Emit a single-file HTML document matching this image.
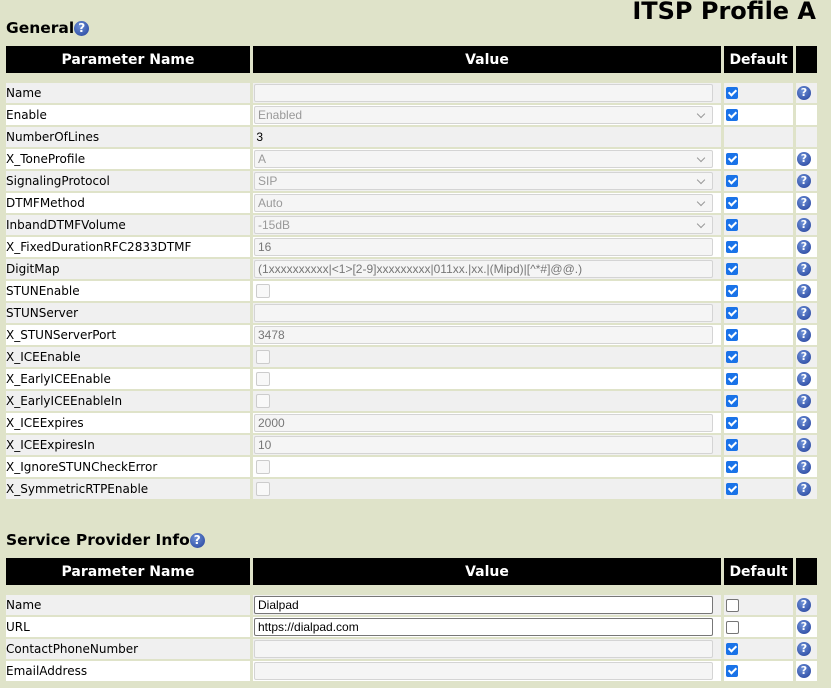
<!DOCTYPE html>
<html><head><meta charset="utf-8"><style>
body{margin:0;background:#dfe3c9;width:831px;height:688px;overflow:hidden;position:relative;font-family:"DejaVu Sans",Verdana,sans-serif;}
h1{position:absolute;right:15px;top:-3px;margin:0;font-size:24px;font-weight:bold;font-family:"DejaVu Sans",sans-serif;}
h2{position:absolute;left:6px;margin:0;font-size:15.5px;font-weight:bold;font-family:"DejaVu Sans",sans-serif;}
.hq{display:inline-block;width:15px;height:15px;border-radius:50%;color:#fff;font:bold 12px/15px "DejaVu Sans",sans-serif;text-align:center;vertical-align:1px;background:radial-gradient(circle at 40% 35%,#6b8fd6,#23409a);}
table{position:absolute;left:3px;border-spacing:3px 2px;table-layout:fixed;}
th{background:#000;color:#fff;height:27px;padding:0;font-size:14px;font-weight:bold;}
td{height:20px;padding:0;font-size:12px;white-space:nowrap;overflow:hidden;}
tr.g td{background:#f0f0f0}
tr.w td{background:#fff}
tr.sp td{height:6px;background:transparent}
.in{width:454px;height:16px;border:1px solid #d4d4d4;border-radius:2px;background:#f5f5f5;margin-left:1px;font:12px/16px "Liberation Sans",Arial,sans-serif;color:#777;padding-left:3px;box-sizing:content-box;position:relative;}
.in.e{background:#fff;border-color:#777;color:#000}
.sel{color:#999}
.sel:after{content:"";position:absolute;right:8px;top:4px;width:5px;height:5px;border-right:1.3px solid #999;border-bottom:1.3px solid #999;transform:rotate(45deg)}
.cb{width:12px;height:12px;border-radius:2px;background:#1a73e8;margin-left:2px;position:relative;}
.cb:after{content:"";position:absolute;left:4px;top:1px;width:3px;height:6px;border-right:2px solid #fff;border-bottom:2px solid #fff;transform:rotate(45deg)}
.cb.u{background:#fff;border:1px solid #767676;width:11px;height:11px}
.cb.u:after{display:none}
.cb.d{background:#f8f8f8;border:1px solid #ccc;width:12px;height:12px;margin-left:3px}
.cb.d:after{display:none}
.q{display:inline-block;width:14px;height:14px;border-radius:50%;background:radial-gradient(circle at 40% 35%,#6b8fd6,#23409a);color:#fff;font:bold 11px/14px "DejaVu Sans",sans-serif;text-align:center;margin-left:1px;vertical-align:middle}
</style></head><body>
<h1>ITSP Profile A</h1>
<h2 style="top:19px">General<span class="hq">?</span></h2>
<table style="top:44px">
<colgroup><col style="width:244px"><col style="width:468px"><col style="width:69px"><col style="width:21px"></colgroup>
<tr><th>Parameter Name</th><th>Value</th><th>Default</th><th></th></tr>
<tr class="sp"><td></td><td></td><td></td><td></td></tr>
<tr class="g"><td>Name</td><td><div class="in"></div></td><td><div class="cb"></div></td><td><span class="q">?</span></td></tr>
<tr class="w"><td>Enable</td><td><div class="in sel">Enabled</div></td><td><div class="cb"></div></td><td></td></tr>
<tr class="g"><td>NumberOfLines</td><td style="font-family:'Liberation Sans',Arial,sans-serif">&nbsp;3</td><td></td><td></td></tr>
<tr class="w"><td>X_ToneProfile</td><td><div class="in sel">A</div></td><td><div class="cb"></div></td><td><span class="q">?</span></td></tr>
<tr class="g"><td>SignalingProtocol</td><td><div class="in sel">SIP</div></td><td><div class="cb"></div></td><td><span class="q">?</span></td></tr>
<tr class="w"><td>DTMFMethod</td><td><div class="in sel">Auto</div></td><td><div class="cb"></div></td><td><span class="q">?</span></td></tr>
<tr class="g"><td>InbandDTMFVolume</td><td><div class="in sel">-15dB</div></td><td><div class="cb"></div></td><td><span class="q">?</span></td></tr>
<tr class="w"><td>X_FixedDurationRFC2833DTMF</td><td><div class="in">16</div></td><td><div class="cb"></div></td><td><span class="q">?</span></td></tr>
<tr class="g"><td>DigitMap</td><td><div class="in">(1xxxxxxxxxx|&lt;1&gt;[2-9]xxxxxxxxx|011xx.|xx.|(Mipd)|[^*#]@@.)</div></td><td><div class="cb"></div></td><td><span class="q">?</span></td></tr>
<tr class="w"><td>STUNEnable</td><td><div class="cb d"></div></td><td><div class="cb"></div></td><td><span class="q">?</span></td></tr>
<tr class="g"><td>STUNServer</td><td><div class="in"></div></td><td><div class="cb"></div></td><td><span class="q">?</span></td></tr>
<tr class="w"><td>X_STUNServerPort</td><td><div class="in">3478</div></td><td><div class="cb"></div></td><td><span class="q">?</span></td></tr>
<tr class="g"><td>X_ICEEnable</td><td><div class="cb d"></div></td><td><div class="cb"></div></td><td><span class="q">?</span></td></tr>
<tr class="w"><td>X_EarlyICEEnable</td><td><div class="cb d"></div></td><td><div class="cb"></div></td><td><span class="q">?</span></td></tr>
<tr class="g"><td>X_EarlyICEEnableIn</td><td><div class="cb d"></div></td><td><div class="cb"></div></td><td><span class="q">?</span></td></tr>
<tr class="w"><td>X_ICEExpires</td><td><div class="in">2000</div></td><td><div class="cb"></div></td><td><span class="q">?</span></td></tr>
<tr class="g"><td>X_ICEExpiresIn</td><td><div class="in">10</div></td><td><div class="cb"></div></td><td><span class="q">?</span></td></tr>
<tr class="w"><td>X_IgnoreSTUNCheckError</td><td><div class="cb d"></div></td><td><div class="cb"></div></td><td><span class="q">?</span></td></tr>
<tr class="g"><td>X_SymmetricRTPEnable</td><td><div class="cb d"></div></td><td><div class="cb"></div></td><td><span class="q">?</span></td></tr>
</table>
<h2 style="top:531px">Service Provider Info<span class="hq">?</span></h2>
<table style="top:556px">
<colgroup><col style="width:244px"><col style="width:468px"><col style="width:69px"><col style="width:21px"></colgroup>
<tr><th>Parameter Name</th><th>Value</th><th>Default</th><th></th></tr>
<tr class="sp"><td></td><td></td><td></td><td></td></tr>
<tr class="g"><td>Name</td><td><div class="in e">Dialpad</div></td><td><div class="cb u"></div></td><td><span class="q">?</span></td></tr>
<tr class="w"><td>URL</td><td><div class="in e">https://dialpad.com</div></td><td><div class="cb u"></div></td><td><span class="q">?</span></td></tr>
<tr class="g"><td>ContactPhoneNumber</td><td><div class="in"></div></td><td><div class="cb"></div></td><td><span class="q">?</span></td></tr>
<tr class="w"><td>EmailAddress</td><td><div class="in"></div></td><td><div class="cb"></div></td><td><span class="q">?</span></td></tr>
</table>
</body></html>
